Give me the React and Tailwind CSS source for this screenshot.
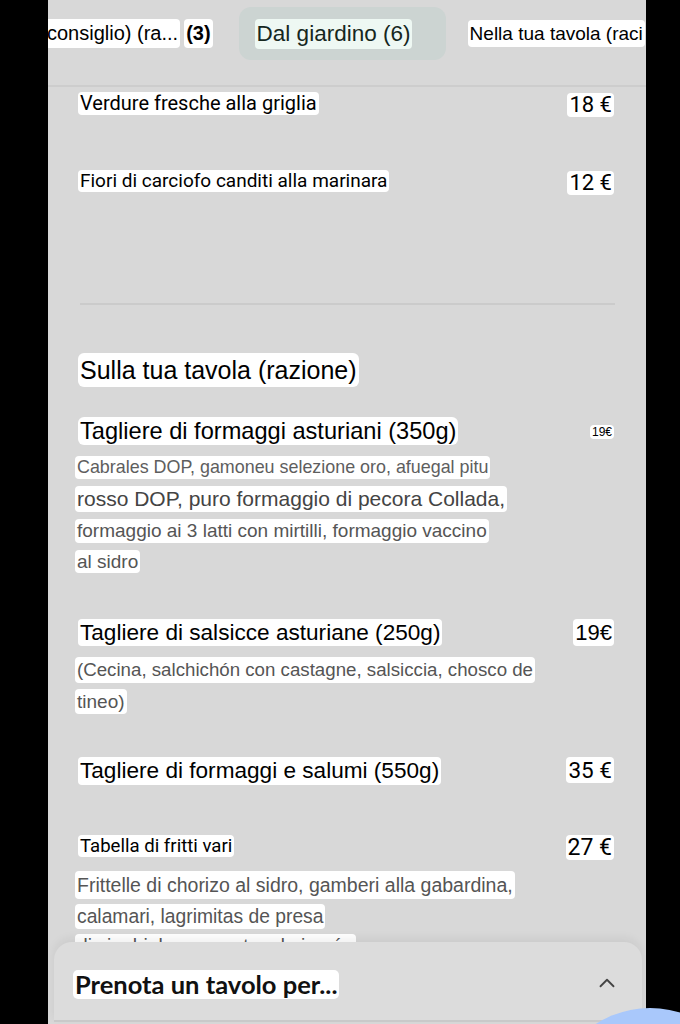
import { ChevronUp } from "lucide-react"

const hl = "inline-block bg-white rounded-[4px] px-[2px] whitespace-nowrap"

const Item = ({ name, price, nameClass, priceClass, className }) => (
  <div className={`flex items-start justify-between ${className}`}>
    <span className={`${hl} ${nameClass}`}>{name}</span>
    <span className={`${hl} ${priceClass}`}>{price}</span>
  </div>
)

const Desc = ({ lines, gap = "gap-[7px]" }) => (
  <div className={`flex flex-col items-start ${gap} ml-[-3px] mt-[11px] text-[#555] font-['Liberation_Sans',Arial,sans-serif]`}>
    {lines.map(([text, cls], i) => (
      <span key={i} className={`${hl} ${cls}`}>
        {text}
      </span>
    ))}
  </div>
)

export default function App() {
  return (
    <div className="relative w-[680px] h-[1024px] bg-black overflow-hidden">
      <div className="relative ml-[48px] w-[598px] h-[1024px] bg-[#d8d8d8] overflow-hidden">
        {/* tabs */}
        <div className="h-[87px] border-b-2 border-[#cdcdcd] flex items-start pt-[7px] whitespace-nowrap font-['Liberation_Sans',Arial,sans-serif]">
          <div className="shrink-0 flex items-center h-[53px] ml-[-3px]">
            <span className={`${hl} text-[20px] leading-[29px] text-black`}>consiglio) (ra...</span>
            <span className={`${hl} ml-[4px] text-[20px] leading-[29px] font-bold text-black`}>(3)</span>
          </div>
          <div className="shrink-0 ml-[26px] w-[207px] h-[53px] rounded-[12px] bg-[#ccd4d2] flex items-center pl-[16px]">
            <span className={`${hl} !bg-[#eef8f3] text-[22.5px] leading-[30px] text-[#15271e]`}>Dal giardino (6)</span>
          </div>
          <div className="shrink-0 flex items-center h-[53px] ml-[22px]">
            <span className={`${hl} text-[19px] leading-[27px] text-black`}>Nella tua tavola (raci</span>
          </div>
        </div>

        <div className="pl-[30px] pr-[32px] font-['Roboto',sans-serif] text-black">
          <Item
            className="mt-[5px]"
            name="Verdure fresche alla griglia"
            price="18 €"
            nameClass="text-[20px] leading-[23px]"
            priceClass="text-[22px] leading-[24px] mt-[1px]"
          />
          <Item
            className="mt-[53px]"
            name="Fiori di carciofo canditi alla marinara"
            price="12 €"
            nameClass="text-[19px] leading-[22px]"
            priceClass="text-[22px] leading-[24px] mt-[1px]"
          />
          <div className="mt-[108px] ml-[2px] mr-[-1px] h-[2px] bg-[#cbcbcb]" />

          <div className="mt-[48px] font-['Liberation_Sans',Arial,sans-serif]">
            <span className={`${hl} text-[25px] leading-[34px] rounded-[6px]`}>Sulla tua tavola (razione)</span>
          </div>

          <div className="font-['Liberation_Sans',Arial,sans-serif]">
            <Item
              className="mt-[30px]"
              name="Tagliere di formaggi asturiani (350g)"
              price="19€"
              nameClass="text-[23.6px] leading-[28px] rounded-[6px]"
              priceClass="text-[12px] leading-[14px] mt-[8px]"
            />
            <Desc
              lines={[
                ["Cabrales DOP, gamoneu selezione oro, afuegal pitu", "text-[17.9px] leading-[23px] text-[#5e5e5e]"],
                ["rosso DOP, puro formaggio di pecora Collada,", "text-[21px] leading-[26px] text-[#444]"],
                ["formaggio ai 3 latti con mirtilli, formaggio vaccino", "text-[19px] leading-[24px]"],
                ["al sidro", "text-[19px] leading-[23px]"],
              ]}
            />

            <Item
              className="mt-[46px]"
              name="Tagliere di salsicce asturiane (250g)"
              price="19€"
              nameClass="text-[22.6px] leading-[27px]"
              priceClass="text-[22px] leading-[27px]"
            />
            <Desc
              gap="gap-[6px]"
              lines={[
                ["(Cecina, salchichón con castagne, salsiccia, chosco de", "text-[18.7px] leading-[26px]"],
                ["tineo)", "text-[19px] leading-[25px]"],
              ]}
            />

            <Item
              className="mt-[43px]"
              name="Tagliere di formaggi e salumi (550g)"
              price="35 €"
              nameClass="text-[22.6px] leading-[28px]"
              priceClass="text-[22.5px] leading-[26px] font-['Roboto',sans-serif]"
            />

            <Item
              className="mt-[50px]"
              name="Tabella di fritti vari"
              price="27 €"
              nameClass="text-[18.6px] leading-[22px] font-['Roboto',sans-serif]"
              priceClass="text-[23px] leading-[25px] font-['Roboto',sans-serif]"
            />
            <Desc
              gap="gap-[5px]"
              lines={[
                ["Frittelle di chorizo al sidro, gamberi alla gabardina,", "text-[19.5px] leading-[28px]"],
                ["calamari, lagrimitas de presa", "text-[19.3px] leading-[25px]"],
                ["di cinghiale, croquetas de jamón", "text-[19.3px] leading-[25px]"],
              ]}
            />
          </div>
        </div>

        {/* bottom sheet */}
        <div className="absolute left-[6px] right-[4px] top-[942px] h-[80px] rounded-t-[18px] bg-[#dcdcdc] border-b-2 border-[#c9c9c9] shadow-[0_-4px_10px_rgba(0,0,0,0.06)] flex items-center justify-between pl-[19px] pr-[22px] pt-[6px]">
          <span className={`${hl} rounded-[5px] text-[25.5px] leading-[29px] font-bold text-[#111] font-['Lato',sans-serif]`}>
            Prenota un tavolo per...
          </span>
          <ChevronUp className="w-[26px] h-[26px] text-[#444] mt-[-2px]" strokeWidth={1.7} />
        </div>
      </div>

      <div className="absolute left-[550px] top-[1008px] w-[200px] h-[200px] rounded-full bg-[#a9c8fb]" />
    </div>
  )
}
